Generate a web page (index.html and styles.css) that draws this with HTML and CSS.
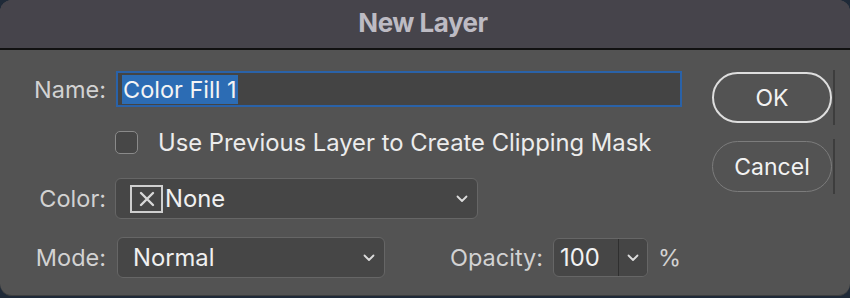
FILE: index.html
```html
<!DOCTYPE html>
<html>
<head>
<meta charset="utf-8">
<link rel="stylesheet" href="styles.css">
</head>
<body>
<div class="dialog">
  <div class="titlebar"><span class="title">New Layer</span></div>
  <div class="content">
    <div class="form">
      <div class="row row-name">
        <label class="label">Name:</label>
        <div class="textfield"><span class="sel">Color Fill 1</span></div>
      </div>
      <div class="row row-check">
        <span class="checkbox"></span>
        <span class="check-text">Use Previous Layer to Create Clipping Mask</span>
      </div>
      <div class="row row-color">
        <label class="label">Color:</label>
        <div class="select select-color">
          <span class="swatch"><svg width="18" height="18" viewBox="0 0 18 18"><path d="M3 3 L15 15 M15 3 L3 15" stroke="#d8d8d8" stroke-width="2.4" stroke-linecap="round"/></svg></span>
          <span class="select-text">None</span>
          <svg class="chev" width="12" height="8" viewBox="0 0 12 8"><path d="M1.5 1.5 L6 6 L10.5 1.5" fill="none" stroke="#dcdcdc" stroke-width="1.8" stroke-linecap="round" stroke-linejoin="round"/></svg>
        </div>
      </div>
      <div class="row row-mode">
        <label class="label">Mode:</label>
        <div class="select select-mode">
          <span class="select-text mode-text">Normal</span>
          <svg class="chev" width="12" height="8" viewBox="0 0 12 8"><path d="M1.5 1.5 L6 6 L10.5 1.5" fill="none" stroke="#dcdcdc" stroke-width="1.8" stroke-linecap="round" stroke-linejoin="round"/></svg>
        </div>
        <label class="label-opacity">Opacity:</label>
        <div class="combo">
          <span class="combo-value">100</span>
          <span class="combo-btn"><svg width="12" height="8" viewBox="0 0 12 8"><path d="M1.5 1.5 L6 6 L10.5 1.5" fill="none" stroke="#dcdcdc" stroke-width="1.8" stroke-linecap="round" stroke-linejoin="round"/></svg></span>
        </div>
        <span class="percent">%</span>
      </div>
    </div>
    <div class="buttons">
      <div class="btn-wrap"><button class="btn btn-ok">OK</button><span class="btn-edge"></span></div>
      <div class="btn-wrap"><button class="btn btn-cancel">Cancel</button><span class="btn-edge"></span></div>
    </div>
  </div>
</div>
</body>
</html>
```

FILE: styles.css
```css
* { box-sizing: border-box; }
html, body {
  margin: 0;
  padding: 0;
  width: 850px;
  height: 298px;
  overflow: hidden;
  background: #1f2a38;
}
body {
  font-family: "Inter", "Liberation Sans", sans-serif;
}
.dialog {
  width: 850px;
  height: 296px;
  background: #535353;
  border-radius: 12px;
  overflow: hidden;
  border-bottom: 1px solid #3e3e3e;
}
.titlebar {
  height: 50px;
  background: #46444b;
  border-bottom: 2px solid #111;
  display: flex;
  align-items: center;
  justify-content: center;
}
.title {
  color: #bdbbc3;
  font-weight: 700;
  font-size: 26px;
  letter-spacing: -0.5px;
  margin-top: -3px;
  margin-right: 4px;
}
.content {
  display: flex;
  padding-top: 21px;
}
.form {
  width: 712px;
  display: flex;
  flex-direction: column;
}
.row {
  display: flex;
  align-items: center;
}
.label {
  width: 106px;
  text-align: right;
  color: #d2d2d2;
  font-size: 23.5px;
}
.textfield {
  margin-left: 10px;
  width: 566px;
  height: 36px;
  border: 2px solid #2a62a8;
  background: #444;
  display: flex;
  align-items: center;
  padding-left: 4px;
}
.sel {
  background: #2c6cb4;
  color: #f4f4f4;
  font-size: 23.5px;
  height: 29px;
  line-height: 29px;
  padding: 0 1px;
}
.row-check {
  margin-top: 21px;
  padding-left: 115px;
}
.checkbox {
  width: 23px;
  height: 23px;
  border: 1.5px solid #8a8a8a;
  border-radius: 5px;
  background: #474747;
}
.check-text {
  margin-left: 20px;
  color: #ececec;
  font-size: 23.8px;
}
.row-color {
  margin-top: 21px;
}
.select {
  height: 41px;
  background: #464646;
  border: 1px solid #666;
  border-radius: 6px;
  display: flex;
  align-items: center;
}
.select-color {
  margin-left: 9px;
  width: 363px;
  padding-left: 14px;
}
.swatch {
  width: 33px;
  height: 28px;
  border: 2px solid #cfcfcf;
  display: flex;
  align-items: center;
  justify-content: center;
}
.select-text {
  color: #f0f0f0;
  font-size: 23.8px;
  margin-left: 2px;
}
.chev {
  margin-left: auto;
  margin-right: 9px;
}
.row-mode {
  margin-top: 18px;
}
.select-mode {
  margin-left: 11px;
  width: 268px;
  height: 41px;
  padding-left: 15px;
}
.mode-text {
  margin-left: 0;
}
.label-opacity {
  margin-left: 65px;
  color: #d2d2d2;
  font-size: 23.5px;
}
.combo {
  margin-left: 10px;
  width: 95px;
  height: 39px;
  display: flex;
  background: #464646;
  border: 1px solid #666;
  border-radius: 6px;
  overflow: hidden;
}
.combo-value {
  width: 65px;
  color: #f2f2f2;
  font-size: 23.8px;
  padding-left: 6px;
  display: flex;
  align-items: center;
  border-right: 1px solid #2f2f2f;
}
.combo-btn {
  flex: 1;
  display: flex;
  align-items: center;
  justify-content: center;
  background: #454545;
}
.percent {
  margin-left: 10px;
  color: #d2d2d2;
  font-size: 23.5px;
}
.buttons {
  display: flex;
  flex-direction: column;
  gap: 18px;
  padding-top: 1px;
}
.btn-wrap {
  display: flex;
}
.btn {
  width: 120px;
  height: 51px;
  border-radius: 26px;
  background: #535353;
  font-family: "Inter", "Liberation Sans", sans-serif;
  font-size: 23px;
  color: #f2f2f2;
  padding: 0;
}
.btn-ok {
  border: 2px solid #dedede;
}
.btn-cancel {
  border: 1.5px solid #7c7c7c;
}
.btn-edge {
  width: 2px;
  margin-left: 1px;
  margin-top: -2px;
  margin-bottom: -2px;
  background: #3d3d3d;
}
```
